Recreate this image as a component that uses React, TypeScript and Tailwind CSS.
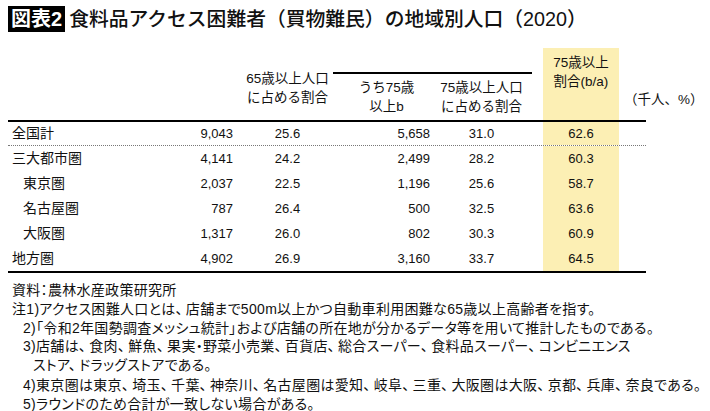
const font = "font-['Liberation_Sans','Noto_Sans_CJK_JP',sans-serif]";

type Row = {
  label: string;
  indent?: boolean;
  a: string;
  ra: string;
  b: string;
  rb: string;
  ba: string;
};

const rows: Row[] = [
  { label: "全国計", a: "9,043", ra: "25.6", b: "5,658", rb: "31.0", ba: "62.6" },
  { label: "三大都市圏", a: "4,141", ra: "24.2", b: "2,499", rb: "28.2", ba: "60.3" },
  { label: "東京圏", indent: true, a: "2,037", ra: "22.5", b: "1,196", rb: "25.6", ba: "58.7" },
  { label: "名古屋圏", indent: true, a: "787", ra: "26.4", b: "500", rb: "32.5", ba: "63.6" },
  { label: "大阪圏", indent: true, a: "1,317", ra: "26.0", b: "802", rb: "30.3", ba: "60.9" },
  { label: "地方圏", a: "4,902", ra: "26.9", b: "3,160", rb: "33.7", ba: "64.5" },
];

// proportional kana, with a little air after each ideographic comma
function Note({ text, className = "" }: { text: string; className?: string }) {
  const parts = text.split("、");
  return (
    <p className={"whitespace-nowrap " + className}>
      {parts.map((p, i) => (
        <span key={i}>
          {p}
          {i < parts.length - 1 && <span className="mr-[3px]">、</span>}
        </span>
      ))}
    </p>
  );
}

function DataRow({ row, first, last }: { row: Row; first?: boolean; last?: boolean }) {
  return (
    <div
      className={
        "flex items-stretch text-[13px] " +
        (first ? "h-[24px] border-b border-dotted border-[#777] " : "h-[25px] ") +
        (last ? "border-b-2 border-black h-[27px]" : "")
      }
    >
      <div className={"w-[152px] flex items-center text-[14px] " + (row.indent ? "pl-[15px]" : "pl-[4px]")}>
        {row.label}
      </div>
      <div className="w-[85px] flex items-center justify-end pr-[12px]">{row.a}</div>
      <div className="w-[85px] flex items-center justify-center">{row.ra}</div>
      <div className="w-[105px] flex items-center justify-end pr-[5px]">{row.b}</div>
      <div className="w-[93px] flex items-center justify-center">{row.rb}</div>
      <div className="w-[15px]" />
      <div className="w-[76px] flex items-center justify-center bg-[#fcefb4]">{row.ba}</div>
      <div className="w-[27px]" />
    </div>
  );
}

export default function App() {
  return (
    <div className={"w-[710px] h-[411px] overflow-hidden bg-white text-[#111] " + font}>
      <div className="flex items-center gap-[4px] pl-[8px] pt-[6px]">
        <span className="h-[26px] bg-black px-[3px] text-[20px] font-bold leading-[26px] text-white">
          図表2
        </span>
        <h1 className="text-[19.8px] font-medium leading-[26px]">
          食料品アクセス困難者（買物難民）の地域別人口（2020）
        </h1>
      </div>

      <div className="ml-[8px] mt-[16px] w-[638px]">
        {/* header */}
        <div className="flex h-[74px] items-stretch border-b-2 border-black text-[13.5px] leading-[18.5px]">
          <div className="w-[152px]" />
          <div className="w-[85px]" />
          <div className="flex w-[85px] flex-col items-center justify-end pb-[13px]">
            <span>65歳以上人口</span>
            <span>に占める割合</span>
          </div>
          <div className="flex w-[198px] flex-col">
            <div className="ml-[3px] mr-[-4px] mt-[24px] h-[2px] bg-black" />
            <div className="flex flex-1 items-end pb-[4px]">
              <div className="flex w-[105px] flex-col items-center pl-[8px]">
                <span>うち75歳</span>
                <span>以上b</span>
              </div>
              <div className="flex w-[93px] flex-col items-center">
                <span>75歳以上人口</span>
                <span>に占める割合</span>
              </div>
            </div>
          </div>
          <div className="w-[15px]" />
          <div className="flex w-[76px] flex-col items-center bg-[#fcefb4] pt-[6px]">
            <span>75歳以上</span>
            <span>割合(b/a)</span>
          </div>
          <div className="flex w-[27px] flex-col justify-end pb-[11px]">
            <span className="ml-[5px] whitespace-nowrap">（千人、%）</span>
          </div>
        </div>

        {rows.map((r, i) => (
          <DataRow key={r.label} row={r} first={i === 0} last={i === rows.length - 1} />
        ))}
      </div>

      <div className="mt-[8px] pl-[12px] text-[14px] leading-[18.8px] tracking-[0.3px] [font-feature-settings:'palt']">
        <Note text="資料：農林水産政策研究所" />
        <Note text="注1)アクセス困難人口とは、店舗まで500m以上かつ自動車利用困難な65歳以上高齢者を指す。" />
        <Note className="pl-[11px]" text="2)「令和2年国勢調査メッシュ統計」および店舗の所在地が分かるデータ等を用いて推計したものである。" />
        <Note className="pl-[11px]" text="3)店舗は、食肉、鮮魚、果実・野菜小売業、百貨店、総合スーパー、食料品スーパー、コンビニエンス" />
        <Note className="pl-[21px]" text="ストア、ドラッグストアである。" />
        <Note className="pl-[11px] pt-[1px]" text="4)東京圏は東京、埼玉、千葉、神奈川、名古屋圏は愛知、岐阜、三重、大阪圏は大阪、京都、兵庫、奈良である。" />
        <Note className="pl-[11px]" text="5)ラウンドのため合計が一致しない場合がある。" />
      </div>
    </div>
  );
}
